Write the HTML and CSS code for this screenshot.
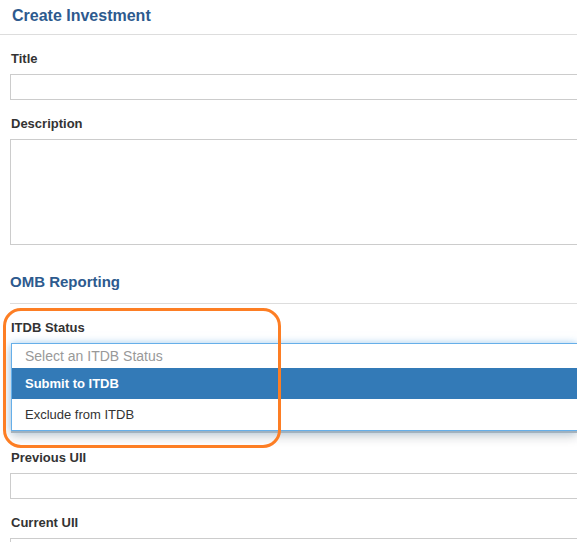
FILE: index.html
```html
<!DOCTYPE html>
<html lang="en">
<head>
    <meta charset="UTF-8">
    <meta name="viewport" content="width=device-width, initial-scale=1.0">
    <title>Create Investment</title>
    <link rel="stylesheet" href="styles.css">
</head>
<body>
    <div class="page-header">
        <h1>Create Investment</h1>
    </div>
    <div class="form">
        <div class="form-group">
            <label for="title">Title</label>
            <input type="text" id="title" class="form-control">
        </div>
        <div class="form-group">
            <label for="description">Description</label>
            <textarea id="description" class="form-control"></textarea>
        </div>

        <h2 class="section-title">OMB Reporting</h2>

        <div class="form-group">
            <label>ITDB Status</label>
            <div class="select-open">
                <div class="select-placeholder">Select an ITDB Status</div>
                <ul class="select-options">
                    <li class="active">Submit to ITDB</li>
                    <li>Exclude from ITDB</li>
                </ul>
            </div>
        </div>
        <div class="form-group after-select">
            <label for="prevUii">Previous UII</label>
            <input type="text" id="prevUii" class="form-control">
        </div>
        <div class="form-group">
            <label for="currUii">Current UII</label>
            <input type="text" id="currUii" class="form-control">
        </div>
    </div>

    <!-- highlight ring around the status field -->
    <div class="callout"></div>
</body>
</html>
```

FILE: styles.css
```css
body {
    margin: 0;
    font-family: "Liberation Sans", Arial, sans-serif;
    font-size: 13px;
    color: #333;
    background: #fff;
    overflow: hidden;
    position: relative;
}
.page-header {
    padding: 6px 12px 8px;
    border-bottom: 1px solid #ddd;
}
.page-header h1 {
    margin: 0;
    font-size: 16px;
    line-height: 20px;
    color: #2d5a8e;
}
.form {
    padding-left: 10px;
}
.form-group {
    margin-top: 15px;
}
.form-group.after-select {
    margin-top: 18px;
}
label {
    display: block;
    font-weight: bold;
    line-height: 18px;
    margin-bottom: 6px;
    padding-left: 1px;
}
.form-control {
    display: block;
    box-sizing: border-box;
    width: 100%;
    height: 26px;
    margin: 0;
    padding: 4px 8px;
    border: 1px solid #ccc;
    border-right: 0;
    border-radius: 0;
    font: inherit;
}
textarea.form-control {
    height: 106px;
    resize: none;
}
.section-title {
    margin: 27px 0 0;
    padding: 0 0 11px;
    border-bottom: 1px solid #ddd;
    font-size: 15px;
    line-height: 20px;
    color: #2d5a8e;
}
.select-open {
    margin-left: 1px;
    border: 1px solid #66afe9;
    border-right: 0;
    background: #fff;
    box-shadow: 0 0 8px rgba(102, 175, 233, 0.55), 0 2px 0 #b3b3b3, 0 6px 10px rgba(0, 0, 0, 0.16);
}
.select-placeholder {
    height: 24px;
    line-height: 24px;
    padding-left: 13px;
    font-size: 14px;
    color: #999;
}
.select-options {
    list-style: none;
    margin: 0;
    padding: 0;
}
.select-options li {
    height: 31px;
    line-height: 31px;
    padding-left: 13px;
}
.select-options li.active {
    background: #337ab7;
    color: #fff;
    font-weight: bold;
}
.callout {
    position: absolute;
    left: 3px;
    top: 308px;
    width: 272px;
    height: 134px;
    border: 3.5px solid #fd7e24;
    border-radius: 18px;
}
```
